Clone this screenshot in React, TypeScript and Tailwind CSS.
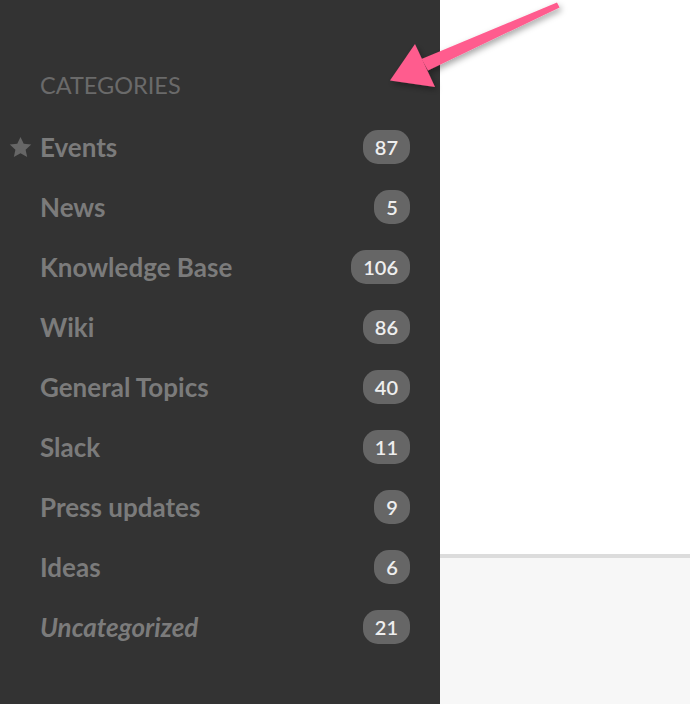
import React from 'react';

interface Category {
  name: string;
  count: number;
  starred?: boolean;
  italic?: boolean;
}

const categories: Category[] = [
  { name: 'Events', count: 87, starred: true },
  { name: 'News', count: 5 },
  { name: 'Knowledge Base', count: 106 },
  { name: 'Wiki', count: 86 },
  { name: 'General Topics', count: 40 },
  { name: 'Slack', count: 11 },
  { name: 'Press updates', count: 9 },
  { name: 'Ideas', count: 6 },
  { name: 'Uncategorized', count: 21, italic: true },
];

function StarIcon() {
  return (
    <svg viewBox="0 0 24 24" className="w-[25px] h-[25px]" fill="#666666">
      <path d="M12 1.8l3.1 6.6 7.2.8-5.4 4.9 1.5 7.1L12 17.6l-6.4 3.6 1.5-7.1L1.7 9.2l7.2-.8z" />
    </svg>
  );
}

function PointerArrow() {
  return (
    <svg
      className="absolute left-0 top-0 pointer-events-none"
      width="690"
      height="704"
      viewBox="0 0 690 704"
    >
      <defs>
        <filter id="arrowShadow" x="-20%" y="-20%" width="140%" height="140%">
          <feDropShadow dx="2" dy="3" stdDeviation="3" floodColor="#000" floodOpacity="0.35" />
        </filter>
      </defs>
      <g filter="url(#arrowShadow)" fill="#ff5c8e">
        <polygon points="557,2.6 559.6,7.4 428,70.5 421.5,59" />
        <polygon points="390,80.5 415,44 435,87" />
      </g>
    </svg>
  );
}

export default function App() {
  return (
    <div className="relative flex w-[690px] h-[704px] overflow-hidden font-['Lato','Noto_Sans',sans-serif]">
      {/* Sidebar */}
      <aside className="w-[440px] h-full bg-[#333333] shrink-0 pt-[69px]">
        <div className="pl-[40px] text-[23.5px] leading-[32px] text-[#6a6a6a]">CATEGORIES</div>
        <ul className="mt-[16px]">
          {categories.map((c) => (
            <li key={c.name} className="flex items-center h-[60px] pr-[30px]">
              <span className="w-[40px] flex justify-end pr-[7px]">{c.starred && <StarIcon />}</span>
              <span
                className={`flex-1 text-[26px] leading-[32px] font-bold text-[#7b7b7b] ${c.italic ? 'italic' : ''}`}
              >
                {c.name}
              </span>
              <span className="h-[34px] min-w-[36px] px-[12px] rounded-[15px] bg-[#666666] text-[#eeeeee] text-[20px] font-semibold flex items-center justify-center">
                {c.count}
              </span>
            </li>
          ))}
        </ul>
      </aside>

      {/* Content */}
      <main className="flex-1 flex flex-col">
        <div className="h-[554px] bg-white" />
        <div className="h-[4px] bg-[#dcdcdc]" />
        <div className="flex-1 bg-[#f7f7f7]" />
      </main>

      <PointerArrow />
    </div>
  );
}
